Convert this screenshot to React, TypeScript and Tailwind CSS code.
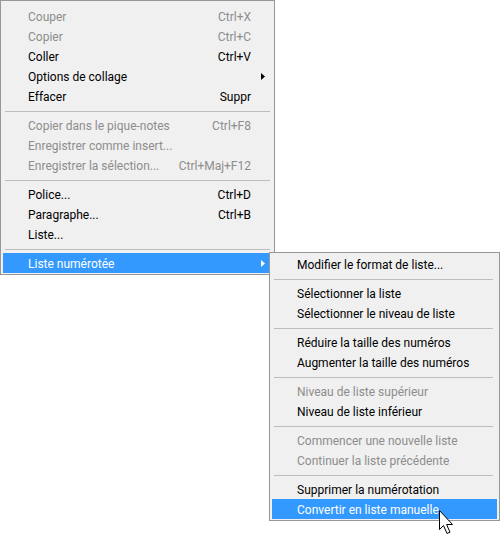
import React from "react";

type RowProps = {
  label: string;
  shortcut?: string;
  disabled?: boolean;
  active?: boolean;
  arrow?: boolean;
};

function Row({ label, shortcut, disabled, active, arrow }: RowProps) {
  const color = active
    ? "bg-[#3399ff] text-white"
    : disabled
    ? "text-[#8d8d8d]"
    : "text-black";
  return (
    <div className={`relative flex h-[20px] items-center pl-[25px] pr-[21px] pt-[1px] leading-[20px] ${color}`}>
      <span className="flex-1 whitespace-nowrap">{label}</span>
      {shortcut && <span className="whitespace-nowrap">{shortcut}</span>}
      {arrow && (
        <svg className="absolute right-[7px] top-[7px]" width="4" height="7" viewBox="0 0 4 7">
          <path d="M0 0 L4 3.5 L0 7 Z" fill={active ? "#ffffff" : "#000000"} />
        </svg>
      )}
    </div>
  );
}

function Sep({ sub }: { sub?: boolean }) {
  return (
    <div className={`h-[9px] pt-[5px] ${sub ? "pl-[2px] pr-[4px]" : "px-[2px]"}`}>
      <div className="h-px bg-[#bdbdbd]" />
    </div>
  );
}

function Cursor() {
  return (
    <svg
      className="absolute left-[438px] top-[509px]"
      width="16"
      height="27"
      viewBox="0 0 16 27"
    >
      <path
        d="M1.5 1.5 V20.5 L5.5 16.5 L9 24.5 L12 23.2 L8.6 15.5 H14.5 Z"
        fill="#ffffff"
        stroke="#000000"
        strokeWidth="1"
        strokeLinejoin="miter"
      />
    </svg>
  );
}

export default function App() {
  return (
    <div className="relative h-[538px] w-[500px] overflow-hidden bg-white font-['Roboto',sans-serif] text-[12px]">
      <div className="w-[275px] border border-[#979797] bg-[#f0f0f0] px-[2px] pt-[5px] pb-[1px]">
        <Row label="Couper" shortcut="Ctrl+X" disabled />
        <Row label="Copier" shortcut="Ctrl+C" disabled />
        <Row label="Coller" shortcut="Ctrl+V" />
        <Row label="Options de collage" arrow />
        <Row label="Effacer" shortcut="Suppr" />
        <Sep />
        <Row label="Copier dans le pique-notes" shortcut="Ctrl+F8" disabled />
        <Row label="Enregistrer comme insert..." disabled />
        <Row label="Enregistrer la sélection..." shortcut="Ctrl+Maj+F12" disabled />
        <Sep />
        <Row label="Police..." shortcut="Ctrl+D" />
        <Row label="Paragraphe..." shortcut="Ctrl+B" />
        <Row label="Liste..." />
        <Sep />
        <Row label="Liste numérotée" arrow active />
      </div>

      <div className="absolute left-[269px] top-[252px] w-[231px] border border-[#979797] bg-[#f0f0f0] px-[2px] pt-[1px] pb-[1px]">
        <Row label="Modifier le format de liste..." />
        <Sep sub />
        <Row label="Sélectionner la liste" />
        <Row label="Sélectionner le niveau de liste" />
        <Sep sub />
        <Row label="Réduire la taille des numéros" />
        <Row label="Augmenter la taille des numéros" />
        <Sep sub />
        <Row label="Niveau de liste supérieur" disabled />
        <Row label="Niveau de liste inférieur" />
        <Sep sub />
        <Row label="Commencer une nouvelle liste" disabled />
        <Row label="Continuer la liste précédente" disabled />
        <Sep sub />
        <Row label="Supprimer la numérotation" />
        <Row label="Convertir en liste manuelle" active />
      </div>

      <Cursor />
    </div>
  );
}
